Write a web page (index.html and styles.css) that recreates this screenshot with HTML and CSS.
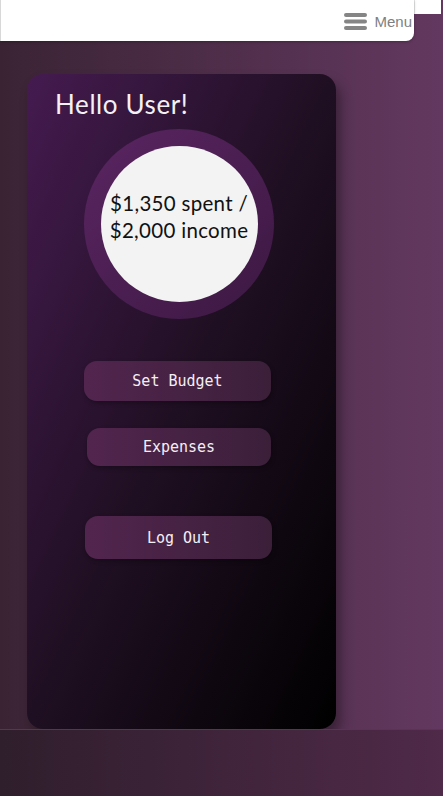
FILE: index.html
```html
<!DOCTYPE html>
<html lang="en">
<head>
<meta charset="utf-8">
<title>Budget</title>
<link rel="stylesheet" href="styles.css">
</head>
<body>
<div class="page">
  <header class="topbar">
    <div class="menu">
      <svg class="burger" width="23" height="17" viewBox="0 0 23 17">
        <rect x="0" y="0" width="23" height="4" rx="2" fill="#858585"/>
        <rect x="0" y="6.5" width="23" height="4" rx="2" fill="#858585"/>
        <rect x="0" y="13" width="23" height="4" rx="2" fill="#858585"/>
      </svg>
      <span class="menu-label">Menu</span>
    </div>
  </header>
  <div class="corner"></div>
  <main class="main">
    <section class="card">
      <h1 class="hello">Hello User!</h1>
      <div class="ring">
        <div class="disc">
          <p class="summary">$1,350 spent /<br>$2,000 income</p>
        </div>
      </div>
      <div class="actions">
        <button class="btn btn-budget">Set Budget</button>
        <button class="btn btn-expenses">Expenses</button>
        <button class="btn btn-logout">Log Out</button>
      </div>
    </section>
  </main>
  <footer class="footer"></footer>
</div>
</body>
</html>
```

FILE: styles.css
```css
* { box-sizing: border-box; }
html, body { margin: 0; padding: 0; }
body {
  width: 443px;
  height: 796px;
  overflow: hidden;
  background: linear-gradient(to right, #3a2434, #633860);
  font-family: "Lato", "Open Sans", sans-serif;
}
.page {
  position: relative;
  display: flex;
  flex-direction: column;
  height: 796px;
}
.topbar {
  width: 414px;
  height: 41px;
  background: #fff;
  border-left: 1px solid #d8d8d8;
  border-bottom-right-radius: 8px;
  box-shadow: 0 1px 3px rgba(0,0,0,0.25);
  display: flex;
  justify-content: flex-end;
  align-items: flex-start;
  position: relative;
  z-index: 2;
}
.corner {
  position: absolute;
  top: 0;
  left: 414px;
  width: 27px;
  height: 14px;
  background: #fff;
  border-left: 1px solid #e4e4e4;
}
.menu {
  display: flex;
  align-items: center;
  gap: 7px;
  margin-top: 13px;
  margin-right: 2px;
}
.burger { display: block; margin-right: 0; }
.menu-label {
  font-family: "Liberation Sans", Arial, sans-serif;
  font-size: 15px;
  color: #808080;
  line-height: 17px;
}
.main {
  flex: 1;
  padding: 33px 0 0 27px;
}
.card {
  width: 309px;
  height: 655px;
  border-radius: 16px;
  background: linear-gradient(to bottom right, #451b50, #1f0f22 50%, #000);
  box-shadow: 5px 8px 12px rgba(0,0,0,0.35);
  display: flex;
  flex-direction: column;
  padding: 14px 0 0 28px;
}
.hello {
  margin: 0;
  font-family: "Lato", sans-serif;
  font-weight: 400;
  font-size: 26px;
  line-height: 32px;
  color: #f4f0f4;
  letter-spacing: 0.6px;
}
.ring {
  width: 190px;
  height: 190px;
  border-radius: 50%;
  margin: 9px 0 0 29px;
  background: linear-gradient(135deg, #5a2562, #3c1842);
  display: flex;
  align-items: center;
  justify-content: center;
}
.disc {
  width: 157px;
  height: 156px;
  border-radius: 50%;
  background: #f3f3f3;
  display: flex;
  align-items: center;
  justify-content: center;
  padding-bottom: 14px;
}
.summary {
  margin: 0;
  text-align: center;
  font-family: "Lato", sans-serif;
  font-size: 20.5px;
  line-height: 27px;
  color: #111;
  white-space: nowrap;
  letter-spacing: 0.3px;
}
.actions {
  display: flex;
  flex-direction: column;
  margin-top: 42px;
}
.btn {
  border: none;
  border-radius: 13px;
  background: linear-gradient(to right, #52254f, #3b1f39);
  color: #f4eef4;
  font-family: "DejaVu Sans Mono", "Liberation Mono", monospace;
  font-size: 15px;
  padding: 0;
  box-shadow: 1px 2px 4px rgba(0,0,0,0.3);
}
.btn-budget { width: 187px; height: 40px; margin-left: 29px; }
.btn-expenses { width: 184px; height: 38px; margin-left: 32px; margin-top: 27px; }
.btn-logout { width: 187px; height: 43px; margin-left: 30px; margin-top: 50px; }
.footer {
  height: 67px;
  background: linear-gradient(to right, #2f1e2c, #4f2a49);
  border-top: 1px solid #5a3553;
}
```
